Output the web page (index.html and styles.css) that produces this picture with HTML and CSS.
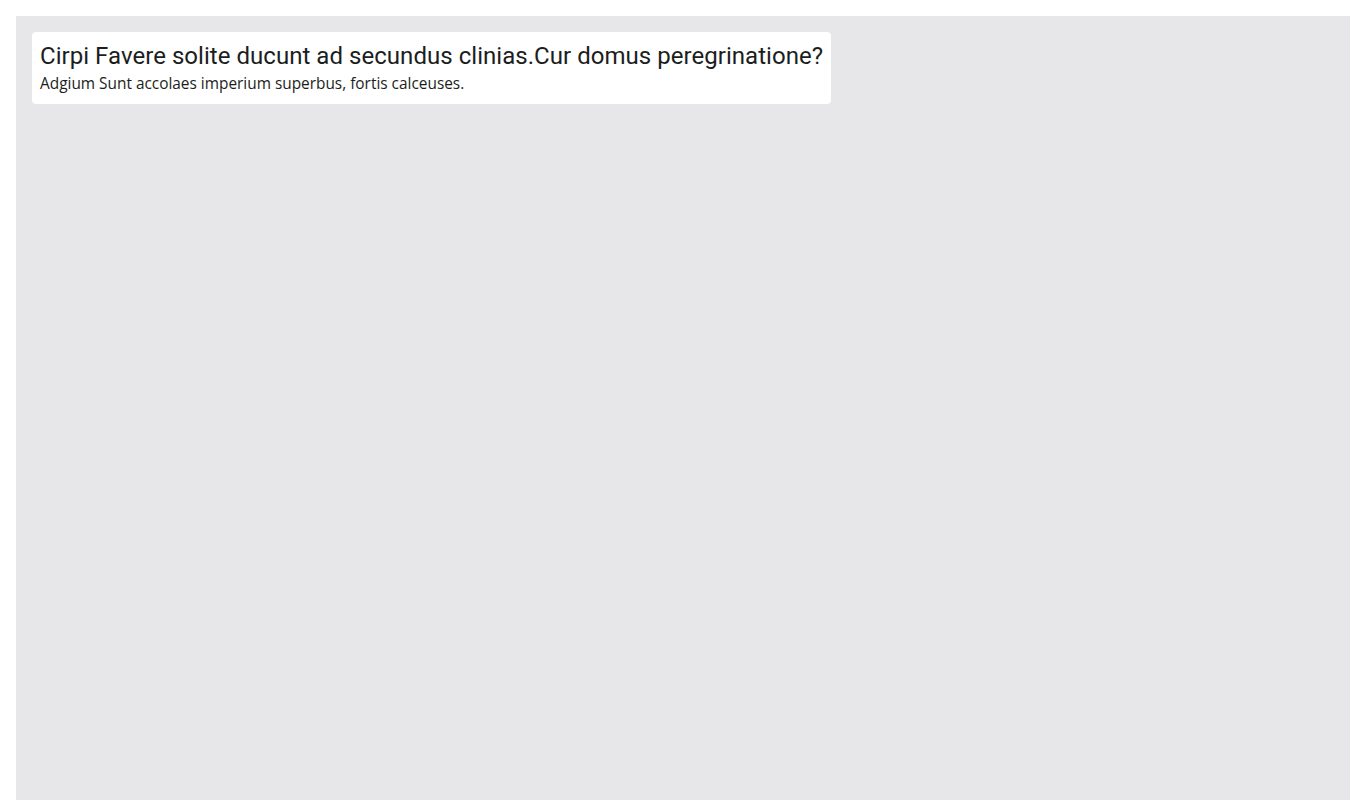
FILE: index.html
```html
<!DOCTYPE html>
<html lang="la">
<head>
<meta charset="utf-8">
<title>Cirpi</title>
<link rel="stylesheet" href="styles.css">
</head>
<body>
<main class="canvas">
  <section class="card">
    <h1 class="card-title">Cirpi Favere solite ducunt ad secundus clinias.Cur domus peregrinatione?</h1>
    <p class="card-text">Adgium Sunt accolaes imperium superbus, fortis calceuses.</p>
  </section>
</main>
</body>
</html>
```

FILE: styles.css
```css
html, body {
  margin: 0;
  padding: 0;
  background: #ffffff;
}
body {
  padding: 16px;
  color: #1b1e21;
}
.canvas {
  background: #e7e7e9;
  min-height: 820px;
  padding: 16px;
  display: flex;
  flex-direction: column;
  align-items: flex-start;
}
.card {
  background: #ffffff;
  border-radius: 4px;
  padding: 8px;
}
.card-title {
  margin: 0;
  font-family: Roboto, "Liberation Sans", sans-serif;
  font-weight: 400;
  font-size: 24px;
  line-height: 32px;
  letter-spacing: 0.04px;
}
.card-text {
  margin: 0;
  font-family: "Open Sans", "Noto Sans", sans-serif;
  font-size: 15.4px;
  line-height: 24px;
}
```
